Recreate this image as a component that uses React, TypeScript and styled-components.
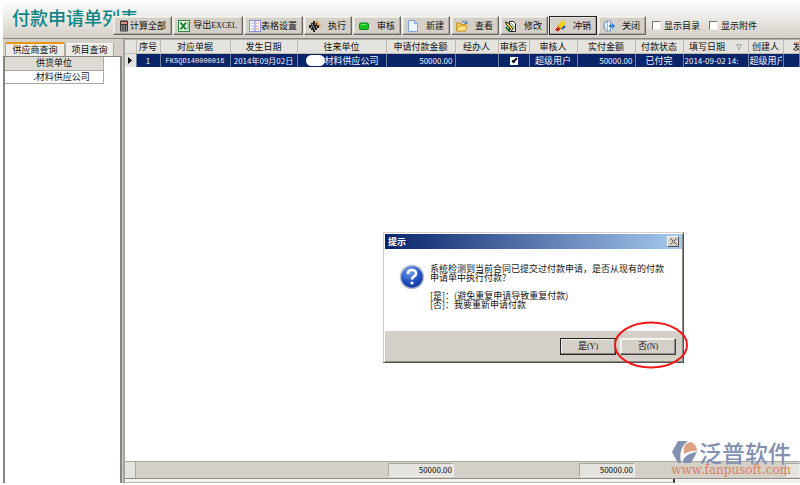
import React from "react";
import styled, { createGlobalStyle } from "styled-components";

const Global = createGlobalStyle`
  *, *::before, *::after { box-sizing: border-box; }
  html, body, #root { height: 100%; margin: 0; }
  body { background: #fff; overflow: hidden; }
  body, button, input, table {
    font-family: "Noto Sans CJK SC", sans-serif;
    font-size: 9px;
    line-height: 12px;
    color: #111;
  }
`;

const Window = styled.div`
  height: 100vh;
  padding: 2px 0 2px 3px;
  display: flex;
  flex-direction: column;
`;

const Header = styled.header`
  height: 37px;
  flex: none;
  display: flex;
  align-items: flex-end;
  padding: 0 0 3px 9px;
  overflow: hidden;
  background: linear-gradient(#fbfbfa, #f0eeeb 35%, #d3cec5);
  border-bottom: 1px solid #8b8984;
`;

const Title = styled.h1`
  margin: 0 -25px 0 0;
  align-self: flex-start;
  flex: none;
  font-size: 18px;
  line-height: 30px;
  font-weight: 500;
  color: #0d8585;
`;

const Toolbar = styled.div`
  position: relative;
  display: flex;
  align-items: center;
  gap: 1px;
  flex: none;
`;

const ToolButton = styled.button<{ $w: number; $focus?: boolean }>`
  width: ${(p) => p.$w}px;
  height: 19px;
  padding: 0 5px 0 4px;
  display: flex;
  align-items: center;
  justify-content: space-between;
  white-space: nowrap;
  background: #d4d0c8;
  border: 1px solid;
  border-color: ${(p) => (p.$focus ? "#222" : "#f4f2ee #6b6964 #6b6964 #f4f2ee")};
  box-shadow: inset -1px -1px #aaa7a0, inset 1px 1px #e9e6e0;
  svg { width: 12px; height: 12px; flex: none; }
`;

const Check = styled.label<{ $gap: number }>`
  display: flex;
  align-items: center;
  gap: 3px;
  margin-left: ${(p) => p.$gap}px;
  white-space: nowrap;
`;

const Box = styled.input`
  appearance: none;
  margin: 0;
  width: 9px;
  height: 9px;
  background: #fff;
  border: 1px solid;
  border-color: #77756f #eee #eee #77756f;
`;

const Body = styled.div`
  flex: 1;
  min-height: 0;
  display: flex;
  background: #d4d0c8;
`;

const Side = styled.aside`
  width: 119px;
  flex: none;
  display: flex;
  flex-direction: column;
  padding-top: 3px;
`;

const Tabs = styled.div`
  display: flex;
  align-items: flex-end;
  padding-left: 2px;
`;

const Tab = styled.button<{ $active?: boolean }>`
  width: ${(p) => (p.$active ? 60 : 49)}px;
  height: ${(p) => (p.$active ? 14 : 13)}px;
  padding: 0 0 1px;
  line-height: 11px;
  background: #eeece6;
  border: 1px solid #aaa79f;
  border-top: ${(p) => (p.$active ? "2px solid #ec9413" : "1px solid #f8f8f5")};
  border-bottom: 0;
  border-radius: 2px 2px 0 0;
`;

const SidePane = styled.div`
  flex: 1;
  background: #fff;
  border: 1px solid #85857f;
  border-width: 1px 2px 0 2px;
`;

const SideTable = styled.table`
  width: 99px;
  border-collapse: collapse;
  table-layout: fixed;
  th, td {
    height: 13px;
    padding: 0;
    font-weight: 400;
    border: 1px solid #aaa8a2;
    border-left: 0;
    text-align: center;
  }
  th { background: #dedbd4; border-top: 0; }
  td { padding-left: 15px; }
`;

const Main = styled.main`
  flex: 1;
  min-width: 0;
  margin-left: 1px;
  display: flex;
  flex-direction: column;
  border-left: 2px solid #a3a29c;
  background: #fff;
`;

const Grid = styled.table`
  width: 100%;
  table-layout: fixed;
  border-collapse: collapse;
  th, td {
    padding: 0 1px;
    font-weight: 400;
    white-space: nowrap;
    overflow: hidden;
    text-align: center;
  }
  th {
    height: 14px;
    background: #e4e3dd;
    border-top: 1px solid #b0aea8;
    border-right: 1px solid #bdbab3;
    border-bottom: 1px solid #bdbab3;
  }
  td {
    height: 12px;
    line-height: 11px;
    color: #f1f3fa;
    background: #0a246a;
    border-right: 1px solid #77809c;
  }
  th:last-child { text-align: left; padding-left: 9px; text-overflow: clip; }
`;

const Marker = styled.td`
  && { background: #e4e3dd; }
  svg { display: block; margin: 0 auto; }
`;

const SortMark = styled.svg`
  margin-left: 11px;
`;

const Num = styled.span`
  font-size: 8px;
`;

const Code = styled.span`
  font-family: "Liberation Mono", monospace;
  font-size: 7px;
`;

const Latin = styled.span`
  font-family: "Liberation Serif", serif;
  font-size: 8px;
`;

const Amount = styled.span`
  display: block;
  text-align: right;
  padding-right: 1px;
  font-size: 8px;
`;

const Clip = styled.span`
  display: block;
  text-align: left;
  overflow: hidden;
`;

const Masked = styled.span`
  display: flex;
  align-items: center;
  padding-left: 7px;
  &::before {
    content: "";
    width: 19px;
    height: 11px;
    border-radius: 6px;
    background: #fff;
  }
`;

const Tick = styled.input`
  display: block;
  margin: 0 auto;
  width: 8px;
  height: 8px;
  appearance: none;
  background: #fff;
  position: relative;
  &:checked::after {
    content: "";
    position: absolute;
    left: 3px;
    top: 0;
    width: 3px;
    height: 6px;
    border: solid #000;
    border-width: 0 2px 2px 0;
    transform: rotate(40deg);
  }
`;

const Blank = styled.div`
  flex: 1;
`;

const Summary = styled.div`
  height: 18px;
  flex: none;
  display: grid;
  grid-template-columns: 11px 252px 66px 125px 56px 150px 1fr;
  align-items: center;
  background: #d4d0c8;
  border-top: 1px solid #aaa8a2;
  border-bottom: 1px solid #8f8d87;
`;

const SummaryLead = styled.div`
  align-self: stretch;
  background: #e4e3dd;
  border-right: 1px solid #aaa8a2;
`;

const Total = styled.output<{ $col: number }>`
  grid-column: ${(p) => p.$col};
  height: 14px;
  padding-right: 1px;
  text-align: right;
  font-size: 8px;
  line-height: 12px;
  background: #e4e3dd;
  border: 1px solid;
  border-color: #aaa8a2 #f0efeb #f0efeb #aaa8a2;
`;

const Splitter = styled.div`
  height: 4px;
  flex: none;
  display: grid;
  grid-template-columns: 550px 1fr;
  background: #f3f2ee;
`;

const Thumb = styled.div`
  border-right: 2px solid #33312e;
  border-bottom: 1px solid #bbb8b1;
`;

const Dialog = styled.section`
  position: absolute;
  left: 383px;
  top: 232px;
  width: 301px;
  padding: 1px;
  background: #d4d0c8;
  border: 1px solid;
  border-color: #d4d0c8 #55534f #55534f #d4d0c8;
  box-shadow: inset 1px 1px #fff, inset -1px -1px #8b8984;
`;

const DialogTitle = styled.header`
  height: 15px;
  padding: 0 3px;
  display: flex;
  align-items: center;
  justify-content: space-between;
  color: #fff;
  font-weight: 700;
  background: linear-gradient(90deg, #0a246a, #a6caf0);
`;

const CloseButton = styled.button`
  width: 12px;
  height: 11px;
  padding: 0;
  display: grid;
  place-items: center;
  background: #d4d0c8;
  border: 1px solid;
  border-color: #fff #55534f #55534f #fff;
`;

const DialogBody = styled.div`
  height: 82px;
  padding: 15px 14px;
  display: flex;
  gap: 5px;
  background: #fff;
`;

const Message = styled.p`
  margin: 0;
  white-space: pre;
  line-height: 9px;
`;

const DialogActions = styled.footer`
  height: 30px;
  padding: 0 6px 0 0;
  display: flex;
  align-items: center;
  justify-content: flex-end;
  gap: 4px;
`;

const DialogButton = styled.button<{ $default?: boolean }>`
  width: 56px;
  height: 17px;
  padding: 0;
  background: #d4d0c8;
  border: 1px solid;
  border-color: ${(p) => (p.$default ? "#222" : "#f8f8f6 #44423f #44423f #f8f8f6")};
  box-shadow: inset -1px -1px #8b8984, inset 1px 1px #f1efea;
`;

const Ring = styled.svg`
  position: absolute;
  left: 612px;
  top: 320px;
`;

const Brand = styled.a`
  position: absolute;
  right: 9px;
  bottom: 9px;
  display: flex;
  flex-direction: column;
  align-items: flex-end;
  text-decoration: none;
`;

const BrandName = styled.span`
  display: flex;
  align-items: center;
  gap: 1px;
  font-size: 23px;
  line-height: 24px;
  font-weight: 500;
  color: #8290b2;
`;

const BrandUrl = styled.span`
  font: 12px/12px "DejaVu Serif", serif;
  color: #d9805f;
`;

const CalcIcon = () => (
  <svg viewBox="0 0 12 12">
    <rect x="2" y="0.5" width="8" height="11" rx="1" fill="#383838" />
    <rect x="3" y="2" width="6" height="2" fill="#e88b83" />
    <path d="M3 6h1.5M5.5 6h1.5M8 6h1M3 8h1.5M5.5 8h1.5M8 8h1M3 10h1.5M5.5 10h1.5M8 10h1" stroke="#ddd" />
  </svg>
);
const ExcelIcon = () => (
  <svg viewBox="0 0 12 12">
    <rect x="0.5" y="0.5" width="11" height="11" fill="#e8f4e5" stroke="#2c8a3b" />
    <path d="M2.5 2.5L8 9.5M8 2.5L2.5 9.5" stroke="#198031" strokeWidth="2" />
    <path d="M9 3h2M9 5h2M9 7h2M9 9h2" stroke="#5daa64" />
  </svg>
);
const SheetIcon = () => (
  <svg viewBox="0 0 12 12">
    <rect x="0.5" y="0.5" width="11" height="11" fill="#fff" stroke="#8790d4" />
    <path d="M6 0v12" stroke="#7070c8" />
    <path d="M2 3h3M2 6h3M2 9h3" stroke="#9aa6e8" />
    <path d="M7 3h3M7 6h3M7 9h3" stroke="#e79a9a" />
  </svg>
);
const RunIcon = () => (
  <svg viewBox="0 0 12 12">
    <path d="M4 1h2v2h2v2h2v3H8v2H6v2H4v-2H2V8H0V5h2V3h2z" fill="#222" />
    <path d="M3 5h1M6 4h1M4 7h1M7 7h1M5 9h1M2 7h1" stroke="#eee" />
    <path d="M7 1l4.5 6" stroke="#e88b1a" strokeWidth="1.5" />
  </svg>
);
const AuditIcon = () => (
  <svg viewBox="0 0 12 12">
    <rect x="1.5" y="3" width="9" height="6.5" rx="1.5" fill="#16c51f" stroke="#0b8d18" />
    <path d="M3 4.5h5" stroke="#69e570" />
  </svg>
);
const NewIcon = () => (
  <svg viewBox="0 0 12 12">
    <path d="M1.5 0.5h6l3 3v8h-9z" fill="#edf6ff" stroke="#7ba7d8" />
    <path d="M7.5 0.5v3h3" fill="#bcd9f5" stroke="#7ba7d8" />
  </svg>
);
const OpenIcon = () => (
  <svg viewBox="0 0 12 12">
    <path d="M0.5 11V3h4l1 1.5h4V11z" fill="#f1c85b" stroke="#c79224" />
    <path d="M0.5 11l2.5-5h8.5L9 11z" fill="#ffe48a" stroke="#d7a02c" />
    <path d="M6 2q3-2.5 4.5 1M11 1v2.5H8.5" fill="none" stroke="#3d73bd" />
  </svg>
);
const EditIcon = () => (
  <svg viewBox="0 0 12 12">
    <path d="M4.5 1.5h4l2 2v8h-6z" fill="#fff" stroke="#222" />
    <path d="M0.5 2l3 1 5 6-2 1.5-5-6z" fill="#e5d235" stroke="#222" />
    <path d="M1 7l3 4" stroke="#167a37" strokeWidth="2" />
    <path d="M6 3l4 5" stroke="#3f8f4f" />
  </svg>
);
const ReverseIcon = () => (
  <svg viewBox="0 0 12 12">
    <path d="M3.5 9L6 6.5" stroke="#d52118" strokeWidth="4.5" strokeLinecap="round" />
    <path d="M6.5 6L9 3" stroke="#f3ce16" strokeWidth="4.5" strokeLinecap="round" />
    <path d="M8 9l3-3" stroke="#2455b8" strokeWidth="2" />
    <path d="M1 9l3-3" stroke="#fff" />
  </svg>
);
const ExitIcon = () => (
  <svg viewBox="0 0 12 12">
    <path d="M5 1q-4 0-4 5t4 5z" fill="#dcecff" stroke="#6687b8" />
    <path d="M5 1h2.5v10H5" fill="#fff" stroke="#7c94bb" />
    <path d="M6 5h3V3l3 3-3 3V7H6z" fill="#277de3" />
  </svg>
);

const tools = [
  { label: "计算全部", width: 59, icon: <CalcIcon /> },
  { label: "导出EXCEL", width: 70, icon: <ExcelIcon /> },
  { label: "表格设置", width: 59, icon: <SheetIcon /> },
  { label: "执行", width: 48, icon: <RunIcon /> },
  { label: "审核", width: 48, icon: <AuditIcon /> },
  { label: "新建", width: 48, icon: <NewIcon /> },
  { label: "查看", width: 48, icon: <OpenIcon /> },
  { label: "修改", width: 48, icon: <EditIcon /> },
  { label: "冲销", width: 48, icon: <ReverseIcon />, focus: true },
  { label: "关闭", width: 48, icon: <ExitIcon /> },
];

const columns: { name: string; width: number; sorted?: boolean }[] = [
  { name: "", width: 11 },
  { name: "序号", width: 24 },
  { name: "对应单据", width: 70 },
  { name: "发生日期", width: 67 },
  { name: "往来单位", width: 89 },
  { name: "申请付款金额", width: 69 },
  { name: "经办人", width: 43 },
  { name: "审核否", width: 31 },
  { name: "审核人", width: 48 },
  { name: "实付金额", width: 58 },
  { name: "付款状态", width: 48 },
  { name: "填写日期", width: 65, sorted: true },
  { name: "创建人", width: 35 },
];

const Col = styled.col<{ $w: number }>`
  width: ${(p) => p.$w}px;
`;

export default function App() {
  return (
    <Window>
      <Global />
      <Header>
        <Title>付款申请单列表</Title>
        <Toolbar>
          {tools.map((t) => (
            <ToolButton key={t.label} $w={t.width} $focus={t.focus} type="button">
              {t.icon}
              {t.label === "导出EXCEL" ? <span>导出<Latin>EXCEL</Latin></span> : t.label}
            </ToolButton>
          ))}
          <Check $gap={5}><Box type="checkbox" />显示目录</Check>
          <Check $gap={8}><Box type="checkbox" />显示附件</Check>
        </Toolbar>
      </Header>
      <Body>
        <Side>
          <Tabs>
            <Tab $active type="button">供应商查询</Tab>
            <Tab type="button">项目查询</Tab>
          </Tabs>
          <SidePane>
            <SideTable>
              <thead><tr><th>供货单位</th></tr></thead>
              <tbody><tr><td>.材料供应公司</td></tr></tbody>
            </SideTable>
          </SidePane>
        </Side>
        <Main>
          <Grid>
            <colgroup>
              {columns.map((c) => <Col key={c.name} $w={c.width} />)}
              <col />
            </colgroup>
            <thead>
              <tr>
                {columns.map((c) => (
                  <th key={c.name}>
                    {c.name}
                    {c.sorted && (
                      <SortMark width="6" height="6" viewBox="0 0 6 6">
                        <path d="M0.5 0.5h5L3 5.5z" fill="none" stroke="#aaa8a2" />
                      </SortMark>
                    )}
                  </th>
                ))}
                <th>发</th>
              </tr>
            </thead>
            <tbody>
              <tr>
                <Marker>
                  <svg width="4" height="7" viewBox="0 0 4 7"><path d="M0 0l4 3.5L0 7z" fill="#000" /></svg>
                </Marker>
                <td><Num>1</Num></td>
                <td><Code>FKSQD140000016</Code></td>
                <td><Num>2014年09月02日</Num></td>
                <td><Masked>材料供应公司</Masked></td>
                <td><Amount>50000.00</Amount></td>
                <td />
                <td><Tick type="checkbox" defaultChecked aria-label="审核否" /></td>
                <td>超级用户</td>
                <td><Amount>50000.00</Amount></td>
                <td>已付完</td>
                <td><Clip><Num>2014-09-02 14:</Num></Clip></td>
                <td><Clip>超级用户</Clip></td>
                <td />
              </tr>
            </tbody>
          </Grid>
          <Blank />
          <Summary>
            <SummaryLead />
            <Total $col={3}>50000.00</Total>
            <Total $col={5}>50000.00</Total>
            <Total $col={7} />
          </Summary>
          <Splitter><Thumb /></Splitter>
        </Main>
      </Body>
      <Brand href="#">
        <BrandName>
          <svg width="26" height="23" viewBox="0 0 26 23">
            <path d="M6 0h10Q6 7 9 22H6L0 11z" fill="#8290b2" />
            <path d="M12 13Q10 2 19 1q6 3 6 9-6-1-13 3z" fill="#e0a084" />
            <path d="M11 22q0-9 14-11l-6 11z" fill="#8290b2" />
          </svg>
          泛普软件
        </BrandName>
        <BrandUrl>www.fanpusoft.com</BrandUrl>
      </Brand>
      <Dialog role="dialog" aria-label="提示">
        <DialogTitle>
          提示
          <CloseButton type="button" aria-label="关闭">
            <svg width="7" height="7" viewBox="0 0 7 7"><path d="M0.5 0.5l6 6M6.5 0.5l-6 6" stroke="#555" /></svg>
          </CloseButton>
        </DialogTitle>
        <DialogBody>
          <svg width="26" height="26" viewBox="0 0 26 26">
            <defs>
              <radialGradient id="q" cx="40%" cy="25%" r="75%">
                <stop offset="0" stopColor="#7aa2f0" />
                <stop offset="0.6" stopColor="#2453c6" />
                <stop offset="1" stopColor="#12349b" />
              </radialGradient>
            </defs>
            <circle cx="13" cy="13" r="11.5" fill="url(#q)" stroke="#b9bfcc" strokeWidth="1.5" />
            <path d="M9 10q0-4 4-4t4 3.5q0 2-2 3t-2 3" fill="none" stroke="#fff" strokeWidth="2.6" />
            <circle cx="13" cy="19" r="1.6" fill="#fff" />
          </svg>
          <Message>{"系统检测到当前合同已提交过付款申请，是否从现有的付款\n申请单中执行付款?\n\n[是]：(避免重复申请导致重复付款)\n[否]：我要重新申请付款"}</Message>
        </DialogBody>
        <DialogActions>
          <DialogButton $default type="button">是<Latin>(Y)</Latin></DialogButton>
          <DialogButton type="button">否<Latin>(N)</Latin></DialogButton>
        </DialogActions>
      </Dialog>
      <Ring width="78" height="50" viewBox="0 0 78 50" aria-hidden="true" pointerEvents="none">
        <ellipse cx="39" cy="25" rx="36" ry="22.5" fill="none" stroke="#f01818" strokeWidth="2" />
      </Ring>
    </Window>
  );
}
